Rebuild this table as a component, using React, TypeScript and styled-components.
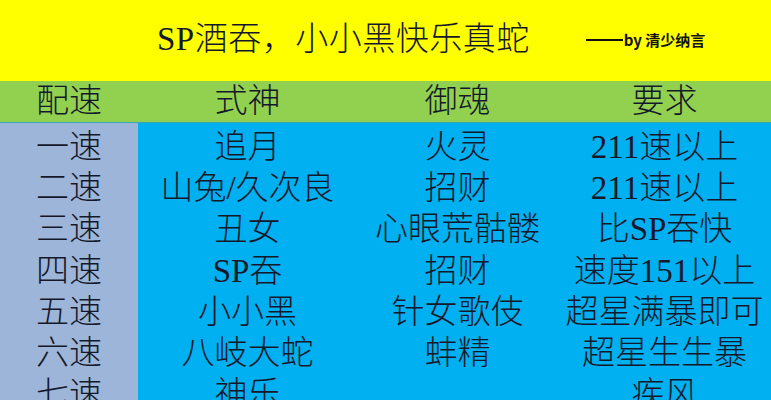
import React from "react";
import styled, { createGlobalStyle } from "styled-components";

const Global = createGlobalStyle`
  html, body { margin: 0; padding: 0; background: #00b0f0; overflow: hidden; }
  body { width: 771px; height: 400px; }
`;

const FONT = `"Liberation Serif", "Noto Sans CJK SC", serif`;

const Page = styled.div`
  width: 771px;
  height: 400px;
  overflow: hidden;
  display: flex;
  flex-direction: column;
  font-family: ${FONT};
  color: #15182a;
`;

const TitleBar = styled.header`
  height: 81px;
  flex-shrink: 0;
  background: #ffff00;
  display: flex;
  align-items: center;
  padding-left: 157px;
  box-sizing: border-box;
`;

const Title = styled.h1`
  margin: 0;
  font-size: 33px;
  font-weight: 300;
  line-height: 1;
  padding-bottom: 2px;
  letter-spacing: 0.5px;
`;

const Byline = styled.span`
  margin-left: 56px;
  font-family: "Noto Sans CJK SC", sans-serif;
  font-size: 15px;
  font-weight: 700;
  color: #111;
  display: flex;
  align-items: baseline;
  padding-bottom: 2px;
`;

const Dash = styled.span`
  display: inline-block;
  width: 37px;
  height: 2px;
  background: #111;
  margin-right: 1px;
  transform: translateY(-5px);
`;

const Grid = styled.div<{ $head?: boolean }>`
  display: grid;
  grid-template-columns: 138px 219px 201px 1fr;
  height: ${(p) => (p.$head ? "41px" : "41.3px")};
  background: ${(p) => (p.$head ? "#92d050" : "#00b0f0")};
  ${(p) => (p.$head ? "border-bottom: 1px solid #3aa6b4;" : "")}
  flex-shrink: 0;
`;

const Cell = styled.div<{ $speed?: boolean; $head?: boolean }>`
  display: flex;
  align-items: center;
  justify-content: center;
  font-size: 33px;
  font-weight: 300;
  line-height: 1;
  white-space: nowrap;
  padding-top: ${(p) => (p.$head ? "0" : "7px")};
  box-sizing: border-box;
  background: ${(p) => (p.$speed ? "#9db5d8" : "transparent")};
`;

const head = ["配速", "式神", "御魂", "要求"];
const rows: string[][] = [
  ["一速", "追月", "火灵", "211速以上"],
  ["二速", "山兔/久次良", "招财", "211速以上"],
  ["三速", "丑女", "心眼荒骷髅", "比SP吞快"],
  ["四速", "SP吞", "招财", "速度151以上"],
  ["五速", "小小黑", "针女歌伎", "超星满暴即可"],
  ["六速", "八岐大蛇", "蚌精", "超星生生暴"],
  ["七速", "神乐", "", "疾风"],
];

export default function App() {
  return (
    <>
      <Global />
      <Page>
        <TitleBar>
          <Title>SP酒吞，小小黑快乐真蛇</Title>
          <Byline>
            <Dash />
            by&nbsp;清少纳言
          </Byline>
        </TitleBar>
        <Grid $head>
          {head.map((h) => (
            <Cell key={h} $head>
              {h}
            </Cell>
          ))}
        </Grid>
        {rows.map((r, i) => (
          <Grid key={i}>
            {r.map((c, j) => (
              <Cell key={j} $speed={j === 0}>
                {c}
              </Cell>
            ))}
          </Grid>
        ))}
      </Page>
    </>
  );
}
